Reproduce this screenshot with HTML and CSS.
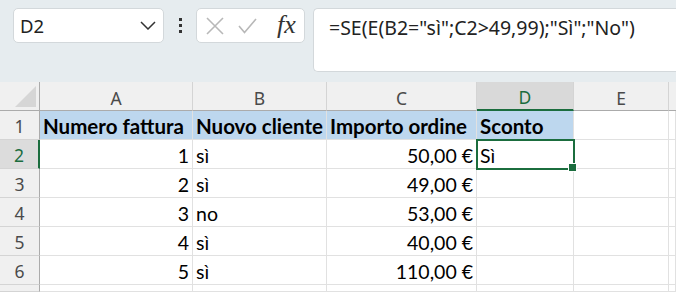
FILE: index.html
```html
<!DOCTYPE html>
<html lang="it">
<head>
    <meta charset="UTF-8">
    <meta name="viewport" content="width=device-width, initial-scale=1.0">
    <title>Foglio1</title>
    <link rel="stylesheet" href="styles.css">
</head>
<body>
    <div class="bar">
        <div class="namebox">
            <span>D2</span>
            <svg class="chev" width="16" height="9" viewBox="0 0 16 9"><path d="M1 1 L8 8 L15 1" fill="none" stroke="#333" stroke-width="1.5"/></svg>
        </div>
        <div class="dots"><i></i><i></i><i></i></div>
        <div class="fnbox">
            <svg width="18" height="18" viewBox="0 0 18 18"><path d="M1 1 L17 17 M17 1 L1 17" stroke="#b8b8b8" stroke-width="1.6"/></svg>
            <svg width="19" height="16" viewBox="0 0 19 16"><path d="M1 8 L6.5 14.5 L18 1" fill="none" stroke="#b8b8b8" stroke-width="1.6"/></svg>
            <span class="fx">fx</span>
        </div>
        <div class="formula">=SE(E(B2="sì";C2&gt;49,99);"Sì";"No")</div>
    </div>

    <div class="sheet">
        <div class="hd corner"><span class="tri"></span></div>
        <div class="hd col">A</div>
        <div class="hd col">B</div>
        <div class="hd col">C</div>
        <div class="hd col sel">D</div>
        <div class="hd col">E</div>
        <div class="hd col rest"></div>

        <div class="hd row">1</div>
        <div class="c head">Numero fattura</div>
        <div class="c head">Nuovo cliente</div>
        <div class="c head">Importo ordine</div>
        <div class="c head">Sconto</div>
        <div class="c"></div>
        <div class="c"></div>

        <div class="hd row sel">2</div>
        <div class="c num">1</div>
        <div class="c">sì</div>
        <div class="c num">50,00 €</div>
        <div class="c active">Sì</div>
        <div class="c"></div>
        <div class="c"></div>

        <div class="hd row">3</div>
        <div class="c num">2</div>
        <div class="c">sì</div>
        <div class="c num">49,00 €</div>
        <div class="c"></div>
        <div class="c"></div>
        <div class="c"></div>

        <div class="hd row">4</div>
        <div class="c num">3</div>
        <div class="c">no</div>
        <div class="c num">53,00 €</div>
        <div class="c"></div>
        <div class="c"></div>
        <div class="c"></div>

        <div class="hd row">5</div>
        <div class="c num">4</div>
        <div class="c">sì</div>
        <div class="c num">40,00 €</div>
        <div class="c"></div>
        <div class="c"></div>
        <div class="c"></div>

        <div class="hd row">6</div>
        <div class="c num">5</div>
        <div class="c">sì</div>
        <div class="c num">110,00 €</div>
        <div class="c"></div>
        <div class="c"></div>
        <div class="c"></div>

        <div class="hd row"></div>
        <div class="c"></div>
        <div class="c"></div>
        <div class="c"></div>
        <div class="c"></div>
        <div class="c"></div>
        <div class="c"></div>
    </div>
</body>
</html>
```

FILE: styles.css
```css
*{
    margin: 0;
    padding: 0;
    box-sizing: border-box;
}
body{
    width: 676px;
    height: 292px;
    overflow: hidden;
    background: #fff;
    font-family: "Noto Sans", "Open Sans", sans-serif;
}
.bar{
    height: 82px;
    background: #e6ecef;
    display: flex;
    align-items: flex-start;
    padding: 8px 0 0 13px;
}
.namebox{
    width: 151px;
    height: 35px;
    background: #fff;
    border: 1px solid #d3d8db;
    border-radius: 5px;
    display: flex;
    align-items: center;
    justify-content: space-between;
    padding: 0 7px 0 6px;
    font-size: 18.5px;
    color: #222;
}
.dots{
    width: 32px;
    height: 35px;
    display: flex;
    flex-direction: column;
    align-items: center;
    justify-content: center;
    gap: 3px;
}
.dots i{
    width: 3px;
    height: 3px;
    background: #333;
}
.fnbox{
    width: 109px;
    height: 35px;
    background: #fff;
    border: 1px solid #d3d8db;
    border-radius: 5px;
    display: flex;
    align-items: center;
    gap: 14px;
    padding-left: 9px;
}
.fx{
    font-family: "Liberation Serif", serif;
    font-style: italic;
    font-size: 26px;
    color: #333;
    margin-left: 6px;
    line-height: 1;
    margin-top: -2px;
}
.formula{
    margin-left: 8px;
    flex: 1;
    height: 64px;
    background: #fff;
    border: 1px solid #d3d8db;
    border-right: none;
    border-radius: 5px 0 0 5px;
    padding: 5px 0 0 15px;
    font-size: 19.5px;
    color: #222;
}

.sheet{
    display: grid;
    grid-template-columns: 40px 153px 134px 150px 97px 95px 7px;
    grid-template-rows: repeat(7, 29px) 7px;
    font-family: "Lato", sans-serif;
    font-size: 19.5px;
    color: #000;
}
.hd{
    background: #f0f0f0;
    color: #4a4a4a;
    font-family: "Noto Sans", sans-serif;
    font-size: 17.5px;
    display: flex;
    align-items: center;
    justify-content: center;
}
.col{
    border-right: 1px solid #d4d4d4;
    border-bottom: 1px solid #ababab;
    padding-top: 3px;
}
.col.rest{
    border-right: none;
}
.col.sel{
    background: #d9d9d9;
    color: #1b6d3e;
    border-bottom: 2px solid #1b6d3e;
}
.corner{
    border-right: 1px solid #ababab;
    border-bottom: 1px solid #ababab;
    justify-content: flex-end;
    align-items: flex-end;
    padding: 0 3px 3px 0;
}
.tri{
    width: 0;
    height: 0;
    border-left: 21px solid transparent;
    border-bottom: 21px solid #d6d6d6;
}
.row{
    border-right: 1px solid #ababab;
    border-bottom: 1px solid #d4d4d4;
    padding-top: 1px;
}
.row.sel{
    background: #dcdcdc;
    color: #1b6d3e;
    border-right: 2px solid #1b6d3e;
}
.c{
    border-right: 1px solid #e1e1e1;
    border-bottom: 1px solid #e1e1e1;
    display: flex;
    align-items: center;
    padding: 2px 3px 0;
    white-space: nowrap;
}
.c.num{
    justify-content: flex-end;
}
.c.head{
    background: #bdd7ee;
    font-weight: bold;
    font-size: 20.5px;
}
.c.active{
    position: relative;
    outline: 2px solid #1b6d3e;
    outline-offset: -1px;
    z-index: 1;
}
.c.active::after{
    content: "";
    position: absolute;
    right: -4px;
    bottom: -4px;
    width: 7px;
    height: 7px;
    background: #1b6d3e;
    border: 1px solid #fff;
}
```
